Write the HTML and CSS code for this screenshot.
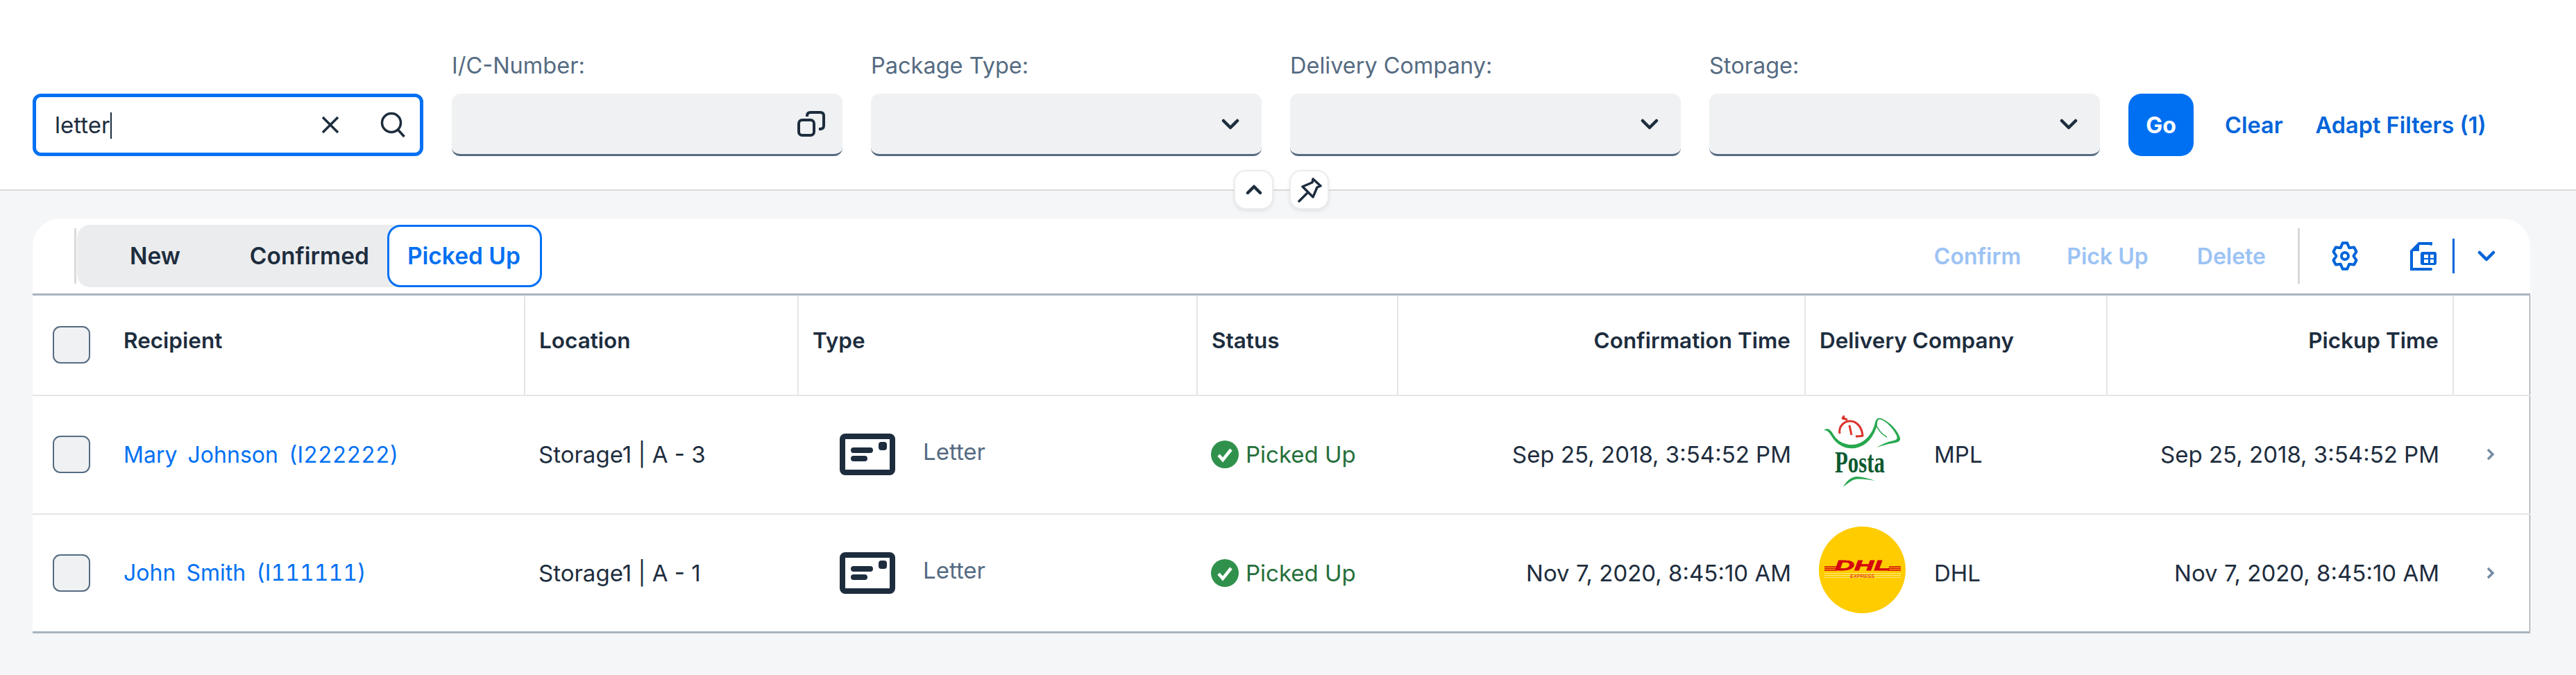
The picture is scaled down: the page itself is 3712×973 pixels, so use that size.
FILE: index.html
```html
<!DOCTYPE html>
<html lang="en">
<head>
    <meta charset="UTF-8">
    <title>Packages</title>
    <link rel="stylesheet" href="styles.css">
</head>
<body>

<header class="filter-bar">
    <div class="filter-field search-field">
        <div class="search-box">
            <span class="search-text">letter</span>
            <svg class="icon-clear" viewBox="0 0 26 26"><path d="M2 2l22 22M24 2L2 24"/></svg>
            <svg class="icon-search" viewBox="0 0 38 38"><circle cx="17" cy="16" r="13.500"/><path d="M26.500 26l9 10"/></svg>
        </div>
    </div>
    <div class="filter-field">
        <label>I/C-Number:</label>
        <div class="filter-input">
            <svg class="icon-valuehelp" viewBox="0 0 40 37"><rect x="2" y="13" width="22" height="22" rx="5"/><path d="M14 8V7q0-5 5-5h14q5 0 5 5v14q0 5-5 5h-2"/></svg>
        </div>
    </div>
    <div class="filter-field">
        <label>Package Type:</label>
        <div class="filter-input"><svg class="icon-down" viewBox="0 0 26 16"><path d="M3 3l10 10L23 3"/></svg></div>
    </div>
    <div class="filter-field">
        <label>Delivery Company:</label>
        <div class="filter-input"><svg class="icon-down" viewBox="0 0 26 16"><path d="M3 3l10 10L23 3"/></svg></div>
    </div>
    <div class="filter-field">
        <label>Storage:</label>
        <div class="filter-input"><svg class="icon-down" viewBox="0 0 26 16"><path d="M3 3l10 10L23 3"/></svg></div>
    </div>
    <div class="filter-actions">
        <button class="go-btn">Go</button>
        <a class="filter-link clear-link">Clear</a>
        <a class="filter-link">Adapt Filters (1)</a>
    </div>
</header>

<div class="bar-toggles">
    <button class="toggle-btn"><svg viewBox="0 0 24 16"><path d="M3 12l9-9 9 9"/></svg></button>
    <button class="toggle-btn"><svg class="icon-pin" viewBox="0 0 36 36"><path d="M3 34l12-12M23 2l11 10-5 2-6 14-15-15 14-6z"/></svg></button>
</div>

<main class="card">
    <div class="toolbar">
        <div class="tabs-wrap">
            <div class="tabs">
                <span class="tab">New</span>
                <span class="tab">Confirmed</span>
                <span class="tab-active">Picked Up</span>
            </div>
        </div>
        <div class="toolbar-actions">
            <span class="action">Confirm</span>
            <span class="action">Pick Up</span>
            <span class="action">Delete</span>
            <span class="toolbar-sep"></span>
            <svg class="icon-gear" viewBox="0 0 38 42"><path d="M15.700 2.350h6.600L25.200 9.300 32.200 8.500 35.500 14.800 31.400 21 35.500 27.200 32.200 33.500 25.200 32.700 22.300 39.650h-6.600L12.800 32.700 5.800 33.500 2.500 27.200 6.600 21 2.500 14.800 5.800 8.500 12.800 9.300Z"/><circle cx="19" cy="21" r="5"/></svg>
            <svg class="icon-export" viewBox="0 0 38 41"><path d="M30 3V2H13L2 13v26h28"/><path class="fill" d="M13 2v11H2z"/><path class="fill" fill-rule="evenodd" d="M18 14h17q3 0 3 3v13q0 3-3 3H18q-3 0-3-3V17q0-3 3-3zM20 18v5h6v-5zM29 18v5h5v-5zM20 25v5h6v-5zM29 25v5h5v-5z"/></svg>
            <span class="export-sep"></span>
            <svg class="icon-more" viewBox="0 0 26 16"><path d="M3 3l10 10L23 3"/></svg>
        </div>
    </div>

    <table class="packages">
        <thead>
            <tr>
                <th class="col-recipient"><div class="cell-check"><span class="checkbox"></span><span class="th-text">Recipient</span></div></th>
                <th class="col-location">Location</th>
                <th class="col-type">Type</th>
                <th class="col-status">Status</th>
                <th class="col-time right">Confirmation Time</th>
                <th class="col-company">Delivery Company</th>
                <th class="col-pickup right">Pickup Time</th>
                <th class="col-nav"></th>
            </tr>
        </thead>
        <tbody>
            <tr>
                <td><div class="cell-check"><span class="checkbox"></span><a class="recipient">Mary&nbsp; Johnson&nbsp; (I222222)</a></div></td>
                <td>Storage1 | A - 3</td>
                <td>
                    <div class="type-cell">
                        <svg class="icon-letter" viewBox="0 0 80 60"><rect x="4" y="4" width="72" height="52" rx="4"/><path d="M20 24h24M20 36h16"/><rect class="dot" x="56" y="12" width="12" height="12" rx="4"/></svg>
                        <span class="type-name">Letter</span>
                    </div>
                </td>
                <td>
                    <div class="status">
                        <svg viewBox="0 0 40 40"><circle cx="20" cy="20" r="20"/><path d="M11 21l6 7 12-15"/></svg>
                        Picked Up
                    </div>
                </td>
                <td class="right">Sep 25, 2018, 3:54:52 PM</td>
                <td>
                    <div class="company-cell">
                        <svg class="logo" viewBox="0 0 125 125">
                            <path class="posta-red" d="M30 32c-2-11 7-18 15-18 9 0 17 8 18 21-3 1-7 1-10 1"/>
                            <path class="posta-red-thin" d="M44 20l3 14M33 9l8 3M36 6l-1 6"/>
                            <path class="posta-green" d="M7 27C14 22 18 28 22 35 30 47 45 50 55 47 68 43 77 32 81 17 82 10 86 8 92 11 104 17 113 27 117 38 118 44 112 45 106 46 98 47 90 50 83 52 90 48 98 44 108 42 113 41 114 38 111 33 107 25 98 15 90 12 85 10 84 14 84 19 80 35 70 50 52 53 38 55 26 48 19 37 15 30 12 27 7 27Z"/>
                            <path class="posta-green-line" d="M81 17C85 26 90 33 98 37"/>
                            <path class="posta-green" d="M35 109C40 100 46 95 54 94 63 94 72 97 81 100 70 98 60 97 52 98 46 100 41 104 35 109Z"/>
                            <text class="posta-name" x="23" y="88" textLength="72" lengthAdjust="spacingAndGlyphs">Posta</text>
                        </svg>
                        <span>MPL</span>
                    </div>
                </td>
                <td class="right">Sep 25, 2018, 3:54:52 PM</td>
                <td class="nav"><svg viewBox="0 0 12 18"><path d="M2 2l7 7-7 7"/></svg></td>
            </tr>
            <tr class="last">
                <td><div class="cell-check"><span class="checkbox"></span><a class="recipient">John&nbsp; Smith&nbsp; (I111111)</a></div></td>
                <td>Storage1 | A - 1</td>
                <td>
                    <div class="type-cell">
                        <svg class="icon-letter" viewBox="0 0 80 60"><rect x="4" y="4" width="72" height="52" rx="4"/><path d="M20 24h24M20 36h16"/><rect class="dot" x="56" y="12" width="12" height="12" rx="4"/></svg>
                        <span class="type-name">Letter</span>
                    </div>
                </td>
                <td>
                    <div class="status">
                        <svg viewBox="0 0 40 40"><circle cx="20" cy="20" r="20"/><path d="M11 21l6 7 12-15"/></svg>
                        Picked Up
                    </div>
                </td>
                <td class="right">Nov 7, 2020, 8:45:10 AM</td>
                <td>
                    <div class="company-cell">
                        <svg class="logo logo-dhl" viewBox="0 0 125 125">
                            <circle class="dhl-bg" cx="62.500" cy="62.500" r="62.500"/>
                            <path class="dhl-stripes" d="M8 58h18M8 60.500h17M8 63h16M101 58h17M100 60.500h18M99 63h19"/>
                            <path class="dhl-lines" d="M8 67.500h110M8 70.500h110M8 73.500h110"/>
                            <text class="dhl-name" x="23" y="63" textLength="80" lengthAdjust="spacingAndGlyphs">DHL</text>
                            <text class="dhl-express" x="45" y="74" textLength="35" lengthAdjust="spacingAndGlyphs">EXPRESS</text>
                        </svg>
                        <span>DHL</span>
                    </div>
                </td>
                <td class="right">Nov 7, 2020, 8:45:10 AM</td>
                <td class="nav"><svg viewBox="0 0 12 18"><path d="M2 2l7 7-7 7"/></svg></td>
            </tr>
        </tbody>
    </table>
</main>

</body>
</html>
```

FILE: styles.css
```css
* {
    box-sizing: border-box;
}

html, body {
    margin: 0;
    height: 100%;
}

body {
    font-family: Inter, Arial, sans-serif;
    font-size: 33px;
    color: #1d2d3e;
    background-color: #f5f6f7;
    overflow: hidden;
}

svg {
    display: block;
    fill: none;
}

/* filter bar */
.filter-bar {
    display: flex;
    align-items: flex-end;
    gap: 41px;
    height: 275px;
    padding: 0 47px 48px;
    background-color: white;
    border-bottom: 2px solid #d9d9d9;
}

.filter-field {
    width: 563px;
}

.filter-field label {
    display: block;
    height: 62px;
    font-size: 32.500px;
    line-height: 44px;
    color: #556b82;
}

.search-box {
    display: flex;
    align-items: center;
    height: 90px;
    padding: 0 20px 0 27px;
    border: 5px solid #0070f2;
    border-radius: 12px;
}

.search-text {
    flex: 1;
}

.search-text::after {
    content: "";
    display: inline-block;
    width: 2px;
    height: 38px;
    margin-left: 1px;
    vertical-align: -8px;
    background-color: #1d2d3e;
}

.icon-clear {
    width: 26px;
    height: 26px;
    margin-right: 58px;
    stroke: #1d2d3e;
    stroke-width: 3.500;
}

.icon-search {
    width: 38px;
    height: 38px;
    stroke: #1d2d3e;
    stroke-width: 3.500;
}

.filter-input {
    display: flex;
    align-items: center;
    justify-content: flex-end;
    height: 90px;
    padding-right: 25px;
    background-color: #eff1f2;
    border-bottom: 3px solid #556b82;
    border-radius: 12px;
}

.icon-valuehelp {
    width: 40px;
    height: 37px;
    stroke: #1d2d3e;
    stroke-width: 4;
}

.icon-down {
    width: 26px;
    height: 16px;
    margin-right: 7px;
    stroke: #1d2d3e;
    stroke-width: 4.500;
    stroke-linecap: round;
    stroke-linejoin: round;
}

.filter-actions {
    display: flex;
    align-items: center;
    height: 90px;
}

.go-btn {
    width: 94px;
    height: 90px;
    padding: 0;
    font: 700 32px Inter, Arial, sans-serif;
    color: white;
    background-color: #0070f2;
    border: none;
    border-radius: 19px;
}

.filter-link {
    font-size: 32.500px;
    font-weight: 600;
    color: #0064d9;
    margin-left: 47px;
}

.clear-link {
    margin-left: 45px;
}

/* toggles on the bar edge */
.bar-toggles {
    position: absolute;
    top: 245px;
    left: 1778px;
    display: flex;
    gap: 23px;
}

.toggle-btn {
    display: flex;
    align-items: center;
    justify-content: center;
    width: 57px;
    height: 57px;
    padding: 0;
    background-color: white;
    border: 2px solid #eaecee;
    border-radius: 17px;
    box-shadow: 0 2px 5px rgba(29,45,62,0.1);
}

.toggle-btn svg {
    width: 24px;
    height: 16px;
    stroke: #1d2d3e;
    stroke-width: 4.500;
    stroke-linecap: round;
    stroke-linejoin: round;
}

.toggle-btn .icon-pin {
    width: 36px;
    height: 36px;
    stroke-width: 3.500;
}

/* card */
.card {
    margin: 40px 66px 0 47px;
    background-color: white;
    border-radius: 40px 40px 0 0;
}

.toolbar {
    display: flex;
    align-items: center;
    justify-content: space-between;
    height: 108px;
    padding: 0 50px 0 60px;
}

.tabs-wrap {
    display: flex;
    align-items: center;
    height: 80px;
    padding-left: 1px;
    border-left: 3px solid #d9d9d9;
}

.tabs {
    display: flex;
    align-items: center;
    height: 90px;
    padding-left: 76px;
    font-size: 33.500px;
    font-weight: 600;
    background-color: #ebecee;
    border-radius: 19px;
}

.tab {
    margin-right: 100px;
}

.tab + .tab {
    margin-right: 26px;
}

.tab-active {
    display: flex;
    align-items: center;
    height: 90px;
    padding: 0 28px 0 26px;
    color: #0070f2;
    background-color: white;
    border: 3px solid #0070f2;
    border-radius: 19px;
}

.toolbar-actions {
    display: flex;
    align-items: center;
}

.action {
    margin-right: 70px;
    font-size: 32px;
    font-weight: 600;
    color: #9cc3f4;
}

.action:first-child {
    margin-right: 66px;
}

.action:nth-child(3) {
    margin-right: 46px;
}

.toolbar-sep {
    width: 3px;
    height: 80px;
    margin-right: 46px;
    background-color: #d9d9d9;
}

.icon-gear {
    width: 38px;
    height: 42px;
    margin-right: 75px;
    stroke: #0064d9;
    stroke-width: 4;
    stroke-linejoin: round;
    overflow: visible;
}

.icon-export {
    width: 38px;
    height: 41px;
    margin-right: 23px;
    stroke: #0064d9;
    stroke-width: 4;
    stroke-linecap: round;
}

.icon-export .fill {
    fill: #0064d9;
    stroke: none;
}

.export-sep {
    width: 3px;
    height: 50px;
    margin-right: 33px;
    background-color: #0064d9;
}

.icon-more {
    width: 26px;
    height: 16px;
    stroke: #0064d9;
    stroke-width: 4.500;
    stroke-linecap: round;
    stroke-linejoin: round;
}

/* table */
.packages {
    width: 100%;
    table-layout: fixed;
    border-collapse: collapse;
    border-top: 3px solid #a8b3bd;
    border-right: 1px solid #8c8c8c;
}

th {
    height: 145px;
    padding: 0 20px 14px;
    font-size: 31.500px;
    font-weight: 600;
    text-align: left;
    border-bottom: 2px solid #e5e5e5;
    border-left: 2px solid #e5e5e5;
}

th:first-child {
    padding-bottom: 0;
}

th:first-child, td:first-child {
    border-left: none;
    padding-left: 29px;
}

.th-text {
    padding-bottom: 14px;
}

td {
    height: 171px;
    padding: 0 20px;
    border-bottom: 2px solid #e5e5e5;
}

tr.last td {
    border-bottom: 3px solid #a8b3bd;
}

.right {
    text-align: right;
}

.col-recipient { width: 709px; }
.col-location { width: 394px; }
.col-type { width: 575px; }
.col-status { width: 289px; }
.col-time { width: 587px; }
.col-company { width: 435px; }
.col-pickup { width: 499px; }

.cell-check {
    display: flex;
    align-items: center;
    gap: 48px;
}

.checkbox {
    width: 54px;
    height: 54px;
    background-color: #eff1f2;
    border: 2px solid #556b82;
    border-radius: 11px;
}

.recipient {
    font-size: 32px;
    color: #0070f2;
    word-spacing: -1px;
    font-variant-numeric: tabular-nums;
}

.type-cell {
    display: flex;
    align-items: center;
    gap: 40px;
    padding-left: 40px;
    color: #556b82;
}

.type-name {
    padding-bottom: 8px;
}

.icon-letter {
    width: 80px;
    height: 60px;
    stroke: #1d2d3e;
    stroke-width: 8;
}

.icon-letter path {
    stroke-linecap: round;
}

.icon-letter .dot {
    fill: #1d2d3e;
    stroke: none;
}

.status {
    display: flex;
    align-items: center;
    gap: 10px;
    color: #256f3a;
}

.status svg {
    width: 40px;
    height: 40px;
}

.status circle {
    fill: #30914c;
}

.status path {
    stroke: white;
    stroke-width: 4.500;
}

.company-cell {
    display: flex;
    align-items: center;
    gap: 41px;
}

.logo {
    width: 125px;
    height: 125px;
}

.logo-dhl {
    margin-bottom: 9px;
}

.posta-red, .posta-red-thin {
    stroke: #d9342b;
    stroke-width: 3;
}

.posta-green {
    fill: #27a84f;
}

.posta-green-line {
    stroke: #27a84f;
    stroke-width: 1.500;
}

.posta-name {
    font: 700 44px "Liberation Serif", serif;
    fill: #0b5a2f;
}

.dhl-bg {
    fill: #ffcc00;
}

.dhl-name {
    font: italic 700 21px "Liberation Sans", sans-serif;
    fill: #d40511;
    stroke: #d40511;
    stroke-width: 0.800;
}

.dhl-stripes {
    stroke: #d40511;
    stroke-width: 1.500;
}

.dhl-lines {
    stroke: #ffe680;
    stroke-width: 1;
}

.dhl-express {
    font: italic 400 8px "Liberation Sans", sans-serif;
    fill: #d40511;
}

.nav svg {
    width: 12px;
    height: 18px;
    margin-left: auto;
    margin-right: 30px;
    stroke: #758ca4;
    stroke-width: 3.500;
}
```
